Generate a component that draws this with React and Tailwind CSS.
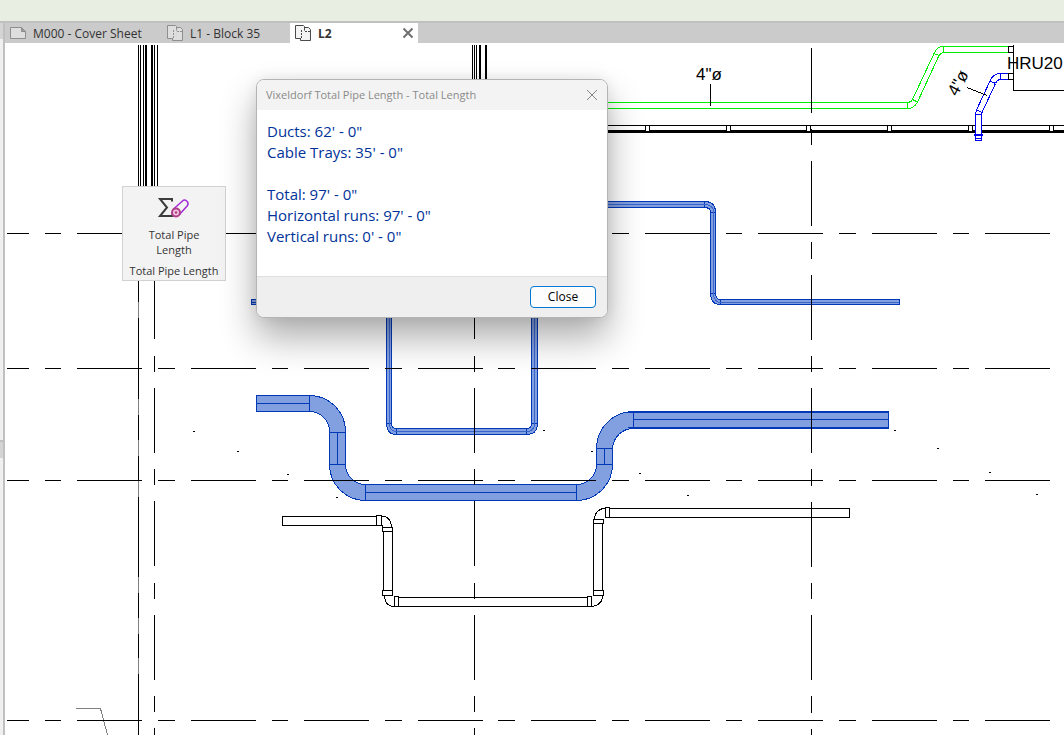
import { useState } from 'react'

const views = [
  { name: 'M000 - Cover Sheet', kind: 'sheet' },
  { name: 'L1 - Block 35', kind: 'plan' },
  { name: 'L2', kind: 'plan' },
]

const gridRows = [233, 368, 480, 720]
const wallStuds = [645, 726, 806, 887, 968, 1049]
const leftWall = [138, 140, 143, 154, 157]
const hiddenParts = [302, 399, 440, 481, 577, 618, 658]
const points = [
  [193, 431],
  [237, 451],
  [287, 474],
  [336, 497],
  [543, 430],
  [591, 451],
  [639, 473],
  [687, 495],
  [894, 430],
  [937, 448],
  [989, 472],
  [1036, 494],
]

function SheetIcon() {
  return (
    <svg width="16" height="16" viewBox="0 0 16 16" fill="#dedede" stroke="#8f8f8f">
      <path d="M.5 2.500h11l4 4v7H.5z" />
      <path d="M11.500 2.500v4h4z" fill="#9a9a9a" />
    </svg>
  )
}

function PlanIcon({ active }) {
  return (
    <svg width="16" height="16" viewBox="0 0 16 16" fill={active ? '#f4f4f4' : '#dedede'} stroke={active ? '#4a4a4a' : '#8f8f8f'}>
      <path d="M.5.5h8l1 1v12h-9z" stroke="none" />
      <path d="M9.500 2.500h4l2 2v11h-9v-3h3z" stroke="none" />
      <path d="M6 13.500H.5V.5h8l1 1v4M9.500 2.500h4l2 2v11h-10v-2" fill="none" />
      <path d="M6.500 5v8M10 6.500h5" fill="none" strokeDasharray="2 1" />
    </svg>
  )
}

function PipeLengthIcon() {
  return (
    <svg width="34" height="22" viewBox="0 0 34 22" fill="none">
      <path d="M15 4.500V2H3l7 8.500L3 19h12.500v-2.500" stroke="#3c3c3c" strokeWidth="2" />
      <path d="M16 12.500L25.500 4C28 1.500 32.500 5 30.500 8.500L22.500 17.500" stroke="#a32bd6" strokeWidth="1.500" />
      <circle cx="19" cy="15.500" r="4" fill="#f0c4dc" stroke="#b0408c" strokeWidth="2" />
      <circle cx="19" cy="15.500" r="1.300" fill="#b0408c" />
    </svg>
  )
}

function GridLines() {
  return (
    <g stroke="#000" shapeRendering="crispEdges">
      {gridRows.map((y) => (
        <line key={y} x1="7" x2="1064" y1={y + 0.5} y2={y + 0.5} strokeDasharray="65 16 16.500 16" strokeDashoffset="43.500" />
      ))}
      <line x1="154.500" x2="154.500" y1="274" y2="735" strokeDasharray="65 16.500 16 16" />
      <line x1="474.500" x2="474.500" y1="274" y2="735" strokeDasharray="65 16.500 16 16" />
      <line x1="811.500" x2="811.500" y1="47.500" y2="735" strokeDasharray="65 16 16.500 16" />
    </g>
  )
}

function Walls() {
  return (
    <g fill="#000" shapeRendering="crispEdges">
      {leftWall.map((x) => (
        <rect key={x} x={x} y="45" width="1" height="145" />
      ))}
      <rect x="145" y="45" width="2" height="145" />
      <rect x="151" y="45" width="2" height="145" />
      <rect x="138" y="190" width="1" height="545" />
      {hiddenParts.map((y) => (
        <rect key={y} x="138" y={y} width="1" height="16" fill="#808080" />
      ))}
      <rect x="472" y="45" width="1" height="40" />
      <rect x="474" y="45" width="1" height="40" />
      <rect x="476" y="45" width="1" height="40" />
      <rect x="479" y="45" width="2" height="40" />
      <rect x="485" y="45" width="2" height="40" />
      <rect x="600" y="125" width="464" height="1" />
      <rect x="600" y="130" width="464" height="3" />
      {wallStuds.map((x) => (
        <rect key={x} x={x + 0.5} y="125.500" width="4" height="6" fill="#fff" stroke="#000" />
      ))}
      <path d="M76 708.500h24.500L107.500 735" fill="none" stroke="#808080" />
    </g>
  )
}

function SmallPipes() {
  return (
    <g fill="none" shapeRendering="crispEdges">
      <g stroke="#00f000">
        <path d="M600 102.500H907.500Q911 102.500 912.500 99.500L934 53.500Q937 46.500 943.500 46.500H1008" />
        <path d="M600 108.500H907.500Q914 108.500 917.500 102L939 55.500Q941 52.500 943.500 52.500H1008" />
        <path d="M907.500 102v6M912.500 99.500l5 2.500M934 53.500l5 2M943.500 46v6" />
      </g>
      <g stroke="#0000f0">
        <path d="M1008 73.500H1000.500Q993 73.500 990 81L976.500 110L975.500 114" />
        <path d="M1008 79.500H1000.500Q997 79.500 995.500 83.500L982 112.500L981.500 114" />
        <path d="M1000.500 73v6M990 81l5.500 2.500M976.500 110l5.500 2.500" />
        <path d="M975.500 114.500h6v20h-6z" fill="#fff" />
        <path d="M974 134.500h9M974 135.500h9M975.500 136v4.500h6V136M975.500 138.500h6" />
      </g>
      <g stroke="#000">
        <path d="M1013 46.500h-4.500v6h4.500M1013 73.500h-4.500v6h4.500" />
        <path d="M1013.500 45v45.500H1064M710.500 84v21.500M967 87.500l20 8" />
      </g>
    </g>
  )
}

function CableTrays() {
  return (
    <g fill="#829fdf" stroke="#0039b8" shapeRendering="crispEdges">
      <path d="M600 201.500H704.500Q715.500 201.500 715.500 212V293Q715.500 299.500 720.500 299.500H899.500V304.500H720.500Q710.500 304.500 710.500 293V212Q710.500 207.500 704.500 207.500H600z" />
      <path d="M704.500 201v6M710 212.500h6M710 293.500h6M720.500 299v6" />
      <path d="M600 204.500H704Q713.500 204.500 713.500 212V293Q713.500 302.500 721 302.500H899" fill="none" stroke="#3a66cc" />
      <path d="M251.500 299.500H260V304.500h-8.500zM252 302.500h8" />
      <path d="M386.500 310V423Q386.500 434.500 396.500 434.500H526.500Q537.500 434.500 537.500 423V310H531.500V423Q531.500 428.500 526.500 428.500H396.500Q391.500 428.500 391.500 423V310z" />
      <path d="M386 423.500h6M396.500 428v6M526.500 428v6M531 423.500h6" />
      <path d="M389.500 310V423Q389.500 431.500 396.500 431.500H526.500Q534.500 431.500 534.500 423V310" fill="none" stroke="#3a66cc" />
    </g>
  )
}

function Ducts() {
  return (
    <g fill="#829fdf" stroke="#0039b8" shapeRendering="crispEdges">
      <path d="M256.500 395.500H309.500A36 36 0 0 1 345.500 431.500V464.500A20 20 0 0 0 365.500 484.500H576.500A20 20 0 0 0 596.500 464.500V448.500A37 37 0 0 1 633.500 411.500H888.500V428.500H633.500A21 21 0 0 0 612.500 448.500V464.500A36 36 0 0 1 576.500 500.500H365.500A36 36 0 0 1 329.500 464.500V431.500A20 20 0 0 0 309.500 411.500H256.500z" />
      <path d="M309.500 395v16M329 432.500h16M329 464.500h16M365.500 484v16M576.500 484v16M596 448.500h16M596 464.500h16M633.500 412v16" />
      <path d="M256 403.500h53M337.500 432v32M365 492.500h211M604.500 448v16M633 419.500h255M628 412.500h260M628 427.500h260" fill="none" />
    </g>
  )
}

function Piping() {
  return (
    <g fill="none" stroke="#000" shapeRendering="crispEdges">
      <path d="M282.500 516.500h94v9h-94zM376.500 515.500h5v10h-5zM382.500 527.500h10v4h-10zM383.500 531.500h9v59h-9zM382.500 590.500h10v5h-10z" />
      <path d="M381.500 516C388 516 391.500 521 391.500 527M384.500 596C384.500 602 388 606.500 394 606.500M382.500 525v2" />
      <path d="M394.500 596.500h4v10h-4zM398.500 597.500h189v9h-189zM587.500 596.500h4v10h-4zM593.500 590.500h10v5h-10zM593.500 523.500h9v67h-9zM593.500 519.500h10v4h-10z" />
      <path d="M592 606.500C598 606 602.500 602 602.500 596M594.500 519C594.500 513 599 508.500 605 508.500" />
      <path d="M605.500 507.500h4v10h-4zM609.500 508.500h240v9h-240z" />
    </g>
  )
}

function Drawing() {
  return (
    <svg className="absolute inset-0 h-full w-full" viewBox="5 43 1059 692" preserveAspectRatio="xMinYMin slice">
      <Walls />
      <SmallPipes />
      <CableTrays />
      <Ducts />
      <Piping />
      <GridLines />
      {points.map(([x, y]) => (
        <rect key={x} x={x} y={y} width="2" height="1" />
      ))}
      <g className="font-['Liberation_Sans',sans-serif] text-[17px]">
        <text x="696" y="80">4"ø</text>
        <text x="1007" y="69">HRU20</text>
        <text transform="translate(957 97) rotate(-62)">4"ø</text>
      </g>
    </svg>
  )
}

function ResultDialog({ onClose }) {
  return (
    <section
      role="dialog"
      aria-labelledby="dialog-title"
      className="absolute left-[251px] top-[36px] w-[352px] overflow-hidden rounded-lg border border-[#b4b4b4] bg-white shadow-[0_20px_36px_rgba(0,0,0,0.32),0_0_14px_rgba(0,0,0,0.08)]"
    >
      <header className="flex h-[30px] items-center justify-between bg-[#f3f3f3] pl-[9px] pr-[5px]">
        <h1 id="dialog-title" className="text-[11px] text-[#8a8a8a]">Vixeldorf Total Pipe Length - Total Length</h1>
        <button onClick={onClose} aria-label="Close dialog" className="p-1">
          <svg width="12" height="12" viewBox="0 0 12 12" stroke="#858585">
            <path d="M1 1l10 10M11 1L1 11" />
          </svg>
        </button>
      </header>
      <div className="px-[10px] pb-[29px] pt-[11px] text-[15px] leading-[21px] text-[#003399]">
        <p>Ducts: 62' - 0"</p>
        <p>Cable Trays: 35' - 0"</p>
        <p className="mt-[21px]">Total: 97' - 0"</p>
        <p>Horizontal runs: 97' - 0"</p>
        <p>Vertical runs: 0' - 0"</p>
      </div>
      <footer className="flex justify-end border-t border-[#dfdfdf] bg-[#efefef] px-[11px] py-[9px]">
        <button onClick={onClose} className="h-[22px] w-[66px] rounded border border-[#0078d4] bg-[#fdfdfd] text-xs text-black">
          Close
        </button>
      </footer>
    </section>
  )
}

export default function App() {
  const [active, setActive] = useState('L2')
  const [open, setOpen] = useState(true)

  return (
    <div className="flex h-screen flex-col overflow-hidden bg-white font-['Open_Sans',sans-serif]">
      <div className="h-[23px] shrink-0 border-b-2 border-[#c0c0c0] bg-[#e8eee2]" />
      <div className="flex min-h-0 flex-1">
        <aside className="flex w-[5px] shrink-0 flex-col border-r-2 border-[#c0c0c0] bg-[#f0f0f0]">
          <div className="h-4 bg-[#d4d4d4]" />
          <div className="flex-1" />
          <div className="h-[18px] border-t-2 border-[#c0c0c0] bg-[#d4d4d4]" />
          <div className="h-[277px]" />
        </aside>
        <main className="flex min-w-0 flex-1 flex-col">
          <nav className="flex h-5 shrink-0 bg-[#cbcbcb] text-xs text-[#333]">
            {views.map((view) => {
              const selected = view.name === active
              return (
                <div
                  key={view.name}
                  className={`flex items-center justify-between pl-[5px] pr-1 ${view.name === 'M000 - Cover Sheet' ? 'w-[157px]' : 'w-32'} ${selected ? 'bg-white font-bold' : ''}`}
                >
                  <button onClick={() => setActive(view.name)} className="flex items-center gap-[7px] whitespace-nowrap">
                    {view.kind === 'sheet' ? <SheetIcon /> : <PlanIcon active={selected} />}
                    <span className="pt-[2px]">{view.name}</span>
                  </button>
                  {selected ? (
                    <button aria-label="Close view">
                      <svg width="12" height="12" viewBox="0 0 12 12" stroke="#707070" strokeWidth="2">
                        <path d="M1.500 1.500l9 9M10.500 1.500l-9 9" />
                      </svg>
                    </button>
                  ) : null}
                </div>
              )
            })}
          </nav>
          <div className="relative min-h-0 flex-1 overflow-hidden">
            <Drawing />
            <div className="absolute left-[117px] top-[143px] flex w-[104px] flex-col items-center border border-[#d2d2d2] bg-[#f3f3f3] pb-[2px] pt-[10px] text-[11px] leading-[15px] text-[#333]">
              <button className="flex w-20 flex-col items-center">
                <PipeLengthIcon />
                <span className="mt-2">Total Pipe Length</span>
              </button>
              <p className="mt-[6px] whitespace-nowrap">Total Pipe Length</p>
            </div>
            {open ? <ResultDialog onClose={() => setOpen(false)} /> : null}
          </div>
        </main>
      </div>
    </div>
  )
}
